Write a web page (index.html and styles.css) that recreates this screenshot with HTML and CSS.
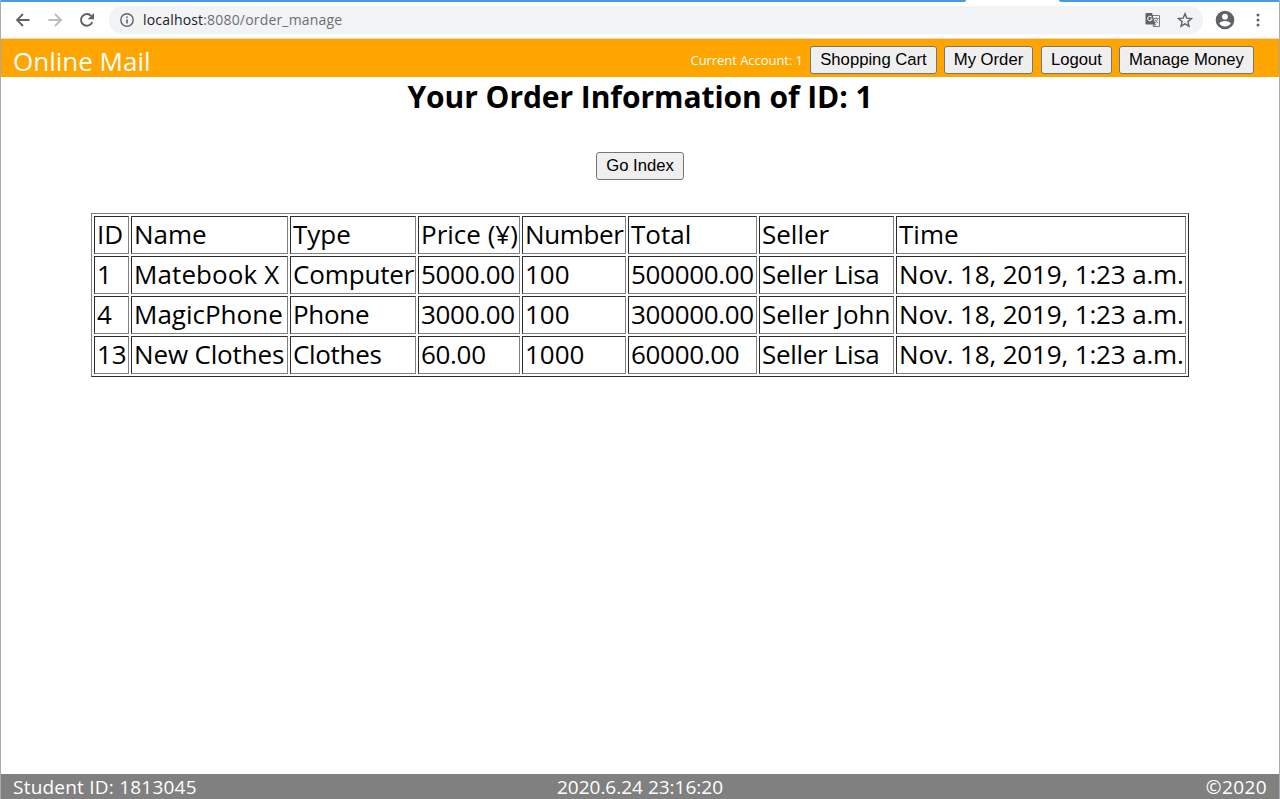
FILE: index.html
```html
<!DOCTYPE html>
<html lang="en">
<head>
<meta charset="utf-8">
<title>Online Mail</title>
<link rel="stylesheet" href="styles.css">
</head>
<body>
<div class="window">
  <div class="tabstrip"><div class="tabs-left"></div><div class="tab-active"></div><div class="tabs-right"></div></div>
  <div class="toolbar">
    <svg class="nav" viewBox="0 0 16 16"><path d="M14.5 8H2.5M8 2L2 8l6 6" fill="none" stroke="#5f6368" stroke-width="1.8"/></svg>
    <svg class="nav" viewBox="0 0 16 16"><path d="M1.500 8H13.500M8 2l6 6-6 6" fill="none" stroke="#babcbe" stroke-width="1.800"/></svg>
    <svg class="nav" viewBox="0 0 16 16"><path d="M13.300 10.200A5.900 5.900 0 1 1 12.300 3.900" fill="none" stroke="#5f6368" stroke-width="1.900"/><path d="M15 .9v6.300H8.700z" fill="#5f6368"/></svg>
    <div class="address">
      <svg class="info" viewBox="0 0 14 14"><circle cx="7" cy="7" r="6.200" fill="none" stroke="#5f6368" stroke-width="1.400"/><path d="M7 6.200v4.300M7 3.400v1.600" stroke="#5f6368" stroke-width="1.600"/></svg>
      <span class="url"><span class="host">localhost</span>:8080/order_manage</span>
      <svg class="translate" viewBox="0 0 16 16"><path d="M6 3.500h8.500v11H9" fill="#f1f3f4" stroke="#777a7e" stroke-width="1"/><path d="M1.500 1H7l3.500 11.500h-9A1 1 0 0 1 .5 11.500V2a1 1 0 0 1 1-1z" fill="#5f6368"/><path d="M6.800 5.200A2.300 2.300 0 1 0 7.200 7H5.200" fill="none" stroke="#fff" stroke-width="1"/><path d="M9 6.500h4.500M11.200 5.300v1.200M12.700 6.500c-.3 2-1.500 3.500-2.700 4.500M10 7.500c.7 1.500 1.700 2.700 3.200 3.700M8 12.500h2.500L8.500 15z" fill="none" stroke="#777a7e" stroke-width=".9"/></svg>
      <svg class="star" viewBox="0 0 16 16"><path d="M8 1.700l1.800 4.400 4.700.4-3.600 3.100 1.100 4.600L8 11.800l-4 2.400 1.100-4.600L1.500 6.500l4.700-.4z" fill="none" stroke="#5f6368" stroke-width="1.400"/></svg>
    </div>
    <svg class="avatar" viewBox="0 0 20 20"><circle cx="10" cy="10" r="9.300" fill="#5f6368"/><circle cx="10" cy="6.700" r="2.900" fill="#fff"/><path d="M4.300 13.600c.8-3.500 10.600-3.500 11.400 0-2.600 4-8.800 4-11.400 0z" fill="#fff"/></svg>
    <svg class="menu" viewBox="0 0 4 14"><g fill="#5f6368"><circle cx="2" cy="2" r="1.500"/><circle cx="2" cy="7" r="1.500"/><circle cx="2" cy="12" r="1.500"/></g></svg>
  </div>
  <header class="header">
    <span class="brand">Online Mail</span>
    <span class="account">Current Account: 1</span>
    <button class="btn cart">Shopping Cart</button>
    <button class="btn order">My Order</button>
    <button class="btn logout">Logout</button>
    <button class="btn money">Manage Money</button>
  </header>
  <main class="main">
    <h1 class="title">Your Order Information of ID: 1</h1>
    <button class="btn index">Go Index</button>
    <table class="orders" border="1">
      <colgroup><col class="c-id"><col class="c-name"><col class="c-type"><col class="c-price"><col class="c-number"><col class="c-total"><col class="c-seller"><col class="c-time"></colgroup>
      <tr><td>ID</td><td>Name</td><td>Type</td><td>Price (¥)</td><td class="number">Number</td><td>Total</td><td>Seller</td><td>Time</td></tr>
      <tr><td>1</td><td class="wide">Matebook X</td><td class="tight">Computer</td><td class="amount">5000.00</td><td>100</td><td class="amount">500000.00</td><td class="amount">Seller Lisa</td><td class="time">Nov. 18, 2019, 1:23 a.m.</td></tr>
      <tr><td>4</td><td>MagicPhone</td><td class="amount">Phone</td><td class="amount">3000.00</td><td>100</td><td class="amount">300000.00</td><td>Seller John</td><td class="time">Nov. 18, 2019, 1:23 a.m.</td></tr>
      <tr><td>13</td><td class="tight">New Clothes</td><td class="amount">Clothes</td><td class="amount">60.00</td><td>1000</td><td class="amount">60000.00</td><td class="amount">Seller Lisa</td><td class="time">Nov. 18, 2019, 1:23 a.m.</td></tr>
    </table>
  </main>
  <footer class="footer"><span class="student">Student ID: 1813045</span><span>2020.6.24 23:16:20</span><span class="right">©2020</span></footer>
</div>
</body>
</html>
```
FILE: styles.css
```css
* { box-sizing: border-box; }
body { margin: 0; background: #fff; font-family: "Open Sans", sans-serif; color: #000; }
.window { display: flex; flex-direction: column; height: 799px; border-left: 1px solid #aaa; border-right: 1px solid #aaa; overflow: hidden; }
.tabstrip { display: flex; height: 2px; background: #fff; }
.tabs-left { width: 965px; background: #4a9ade; border-bottom-right-radius: 3px 2px; }
.tab-active { width: 93px; }
.tabs-right { flex: 1; background: #4a9ade; border-bottom-left-radius: 3px 2px; }
.toolbar { display: flex; align-items: center; height: 37px; padding: 0 17px 1px 14px; border-bottom: 1px solid #e2d8c6; }
.nav { width: 16px; height: 16px; margin-right: 16px; flex: none; }
.address { display: flex; align-items: center; width: 1094px; height: 28px; margin-left: -2px; padding: 0 10px 0 11px; border-radius: 14px; background: #f1f3f4; }
.info { width: 14px; height: 14px; margin-right: 9px; }
.url { flex: 1; font-size: 14px; line-height: 20px; letter-spacing: .18px; color: #6b6f73; }
.host { color: #202124; }
.translate { width: 16px; height: 16px; margin-right: 16px; }
.star { width: 16px; height: 16px; }
.avatar { width: 20px; height: 20px; margin-left: 12px; flex: none; }
.menu { width: 4px; height: 14px; margin-left: 21px; flex: none; }
.header { display: flex; align-items: flex-start; height: 38px; padding: 7px 25px 0 12px; background: #ffa500; color: #fff; }
.brand { flex: 1; font-size: 26px; line-height: 30px; }
.account { margin-right: 7px; font-size: 13px; line-height: 28px; letter-spacing: -.05px; white-space: nowrap; }
.btn { flex: none; height: 28px; padding: 0; border: 1px solid #767676; border-radius: 3px; background: #efefef; color: #000; font: 16.670px/24px "Liberation Sans", sans-serif; white-space: nowrap; }
.cart { width: 127px; margin-right: 7px; }
.order { width: 89px; margin-right: 8px; }
.logout { width: 71px; margin-right: 7px; }
.money { width: 135px; }
.main { display: flex; flex-direction: column; align-items: center; flex: 1; }
.title { margin: 0; font-size: 30px; line-height: 40px; font-weight: 700; letter-spacing: -.06px; }
.index { width: 88px; margin: 35px 0 33px; }
.orders { table-layout: fixed; width: 1098px; height: 164px; border-spacing: 2px; font-size: 26px; line-height: 34px; white-space: nowrap; }
.orders td { height: 38px; padding: 0 0 2px 2px; }
.c-id { width: 35px; }
.c-name { width: 157px; }
.c-type { width: 126px; }
.c-price { width: 102px; }
.c-number { width: 104px; }
.c-total { width: 129px; }
.c-seller { width: 135px; }
.c-time { width: 290px; }
.wide { letter-spacing: .1px; }
.tight { letter-spacing: -.15px; }
.number { letter-spacing: -.35px; }
.amount { letter-spacing: -.32px; }
.time { letter-spacing: -.15px; }
.footer { display: grid; grid-template-columns: 1fr auto 1fr; height: 25px; padding: 1px 12px 0; background: #808080; color: #fff; font-size: 19px; line-height: 25px; }
.student { letter-spacing: .22px; }
.right { text-align: right; letter-spacing: .4px; }
```
